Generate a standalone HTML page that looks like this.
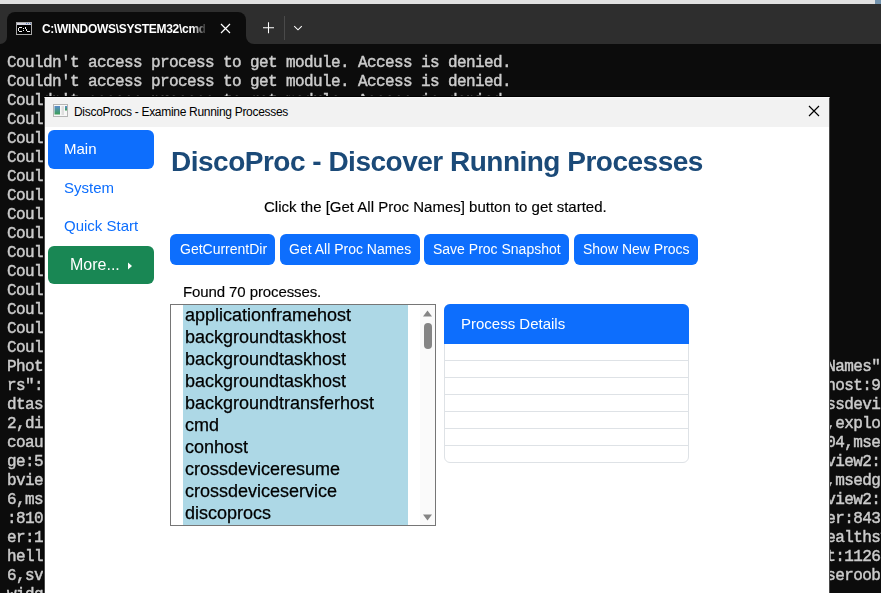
<!DOCTYPE html>
<html><head><meta charset="utf-8">
<style>
*{margin:0;padding:0;box-sizing:border-box}
html,body{width:881px;height:593px;overflow:hidden;background:#0c0c0c;position:relative;font-family:"Liberation Sans",sans-serif}
.abs{position:absolute}
#topstrip{left:0;top:0;width:881px;height:4px;background:#e1e1e1}
#topblue{left:875px;top:0;width:6px;height:4px;background:#7393ad}
#barTop{left:0;top:4px;width:881px;height:16px;background:#2e2e2e}
#barL{left:0;top:4px;width:7px;height:40px;background:#2e2e2e;border-bottom-right-radius:8px}
#barR{left:246px;top:4px;width:635px;height:40px;background:#2e2e2e;border-bottom-left-radius:8px}
#tab{left:7px;top:12px;width:239px;height:33px;background:#0c0c0c;border-radius:8px 8px 0 0}
#tabtitle{left:42px;top:19px;width:163px;height:20px;overflow:hidden;color:#fff;font-size:12px;letter-spacing:-0.3px;line-height:20px;font-weight:bold;white-space:nowrap;-webkit-mask-image:linear-gradient(to right,#000 92%,rgba(0,0,0,0.2) 100%)}
#term{left:7px;top:2px;width:881px;height:593px;color:#cccccc;font-family:"Liberation Mono",monospace;font-size:16px;letter-spacing:-0.6px;white-space:pre;will-change:transform;-webkit-text-stroke:0.45px #cccccc}
.tl{position:absolute;left:0;height:19px;line-height:19px}
#dlg{left:44px;top:97px;width:786px;height:500px;background:#fff;border:1px solid #4a4a4a;border-top-color:#fafafa;border-bottom:none;box-shadow:0 -1px 0 #000,-1px 0 0 #050505}
#title{left:45px;top:98px;width:784px;height:29px;background:#f2f2f2}
#titletext{left:74px;top:104px;font-size:12px;letter-spacing:-0.3px;line-height:16px;color:#000;white-space:nowrap}
.btn{position:absolute;background:#0d6efd;color:#fff;border-radius:6px;white-space:nowrap}
.t{position:absolute;white-space:nowrap;line-height:1}
.li{position:absolute;left:0;height:22px;line-height:22px;font-size:18px;color:#000;white-space:nowrap;-webkit-text-stroke:0.25px #000}
.lg{position:absolute;left:0;width:243px;height:1px;background:#dee2e6}
</style></head>
<body>
<div id="topstrip" class="abs"></div>
<div id="topblue" class="abs"></div>
<div id="barTop" class="abs"></div>
<div id="barL" class="abs"></div>
<div id="barR" class="abs"></div>
<div id="tab" class="abs"></div>
<svg class="abs" style="left:16px;top:22px" width="16" height="13" viewBox="0 0 16 13" shape-rendering="crispEdges"><rect x="0" y="0" width="16" height="13" fill="#a8a8a8"/><rect x="1" y="1" width="14" height="2" fill="#d4d4e0"/><rect x="10" y="1" width="1" height="1" fill="#5a78b0"/><rect x="12" y="1" width="1" height="1" fill="#5a78b0"/><rect x="14" y="1" width="1" height="1" fill="#5a78b0"/><rect x="1" y="3" width="14" height="9" fill="#000"/><rect x="3" y="5" width="1" height="1" fill="#f0f0f0"/><rect x="3" y="9" width="1" height="1" fill="#f0f0f0"/><rect x="4" y="5" width="1" height="1" fill="#f0f0f0"/><rect x="4" y="9" width="1" height="1" fill="#f0f0f0"/><rect x="5" y="5" width="1" height="1" fill="#f0f0f0"/><rect x="5" y="9" width="1" height="1" fill="#f0f0f0"/><rect x="2" y="6" width="1" height="1" fill="#f0f0f0"/><rect x="2" y="7" width="1" height="1" fill="#f0f0f0"/><rect x="2" y="8" width="1" height="1" fill="#f0f0f0"/><rect x="7" y="6" width="1" height="1" fill="#f0f0f0"/><rect x="7" y="8" width="1" height="1" fill="#f0f0f0"/><rect x="9" y="5" width="1" height="1" fill="#f0f0f0"/><rect x="9" y="6" width="1" height="1" fill="#f0f0f0"/><rect x="10" y="7" width="1" height="1" fill="#f0f0f0"/><rect x="10" y="8" width="1" height="1" fill="#f0f0f0"/><rect x="11" y="9" width="1" height="1" fill="#f0f0f0"/><rect x="12" y="9" width="1" height="1" fill="#f0f0f0"/><rect x="13" y="9" width="1" height="1" fill="#f0f0f0"/></svg>
<div id="tabtitle" class="abs">C:\WINDOWS\SYSTEM32\cmd.exe</div>
<svg class="abs" style="left:220px;top:23px" width="11" height="11" viewBox="0 0 11 11"><path d="M1 1L10 10M10 1L1 10" stroke="#fff" stroke-width="1.2"/></svg>
<svg class="abs" style="left:262px;top:21px" width="13" height="13" viewBox="0 0 13 13"><path d="M6.5 1.2V12.2M1 6.7H12" stroke="#fff" stroke-width="1.05"/></svg>
<div class="abs" style="left:284px;top:16px;width:1px;height:24px;background:#4a4a4a"></div>
<svg class="abs" style="left:293px;top:25px" width="10" height="6" viewBox="0 0 10 6"><path d="M1.2 1.2L5 4.8L8.8 1.2" stroke="#fff" stroke-width="1.05" fill="none"/></svg>

<div id="term" class="abs">
<div class="tl" style="top:52px">Couldn't access process to get module. Access is denied.</div>
<div class="tl" style="top:71px">Couldn't access process to get module. Access is denied.</div>
<div class="tl" style="top:90px">Couldn't access process to get module. Access is denied.</div>
<div class="tl" style="top:109px">Couldn't access process to get module. Access is denied.</div>
<div class="tl" style="top:128px">Couldn't access process to get module. Access is denied.</div>
<div class="tl" style="top:147px">Couldn't access process to get module. Access is denied.</div>
<div class="tl" style="top:166px">Couldn't access process to get module. Access is denied.</div>
<div class="tl" style="top:185px">Couldn't access process to get module. Access is denied.</div>
<div class="tl" style="top:204px">Couldn't access process to get module. Access is denied.</div>
<div class="tl" style="top:223px">Couldn't access process to get module. Access is denied.</div>
<div class="tl" style="top:242px">Couldn't access process to get module. Access is denied.</div>
<div class="tl" style="top:261px">Couldn't access process to get module. Access is denied.</div>
<div class="tl" style="top:280px">Couldn't access process to get module. Access is denied.</div>
<div class="tl" style="top:299px">Couldn't access process to get module. Access is denied.</div>
<div class="tl" style="top:318px">Couldn't access process to get module. Access is denied.</div>
<div class="tl" style="top:337px">Couldn't access process to get module. Access is denied.</div>
<div class="tl" style="top:356px">Photo                                                                                      Names"</div>
<div class="tl" style="top:375px">rs":[                                                                                      host:97</div>
<div class="tl" style="top:394px">dtask                                                                                      ssdevic</div>
<div class="tl" style="top:413px">2,dis                                                                                      ,explor</div>
<div class="tl" style="top:432px">coaut                                                                                      04,msed</div>
<div class="tl" style="top:451px">ge:52                                                                                      view2:</div>
<div class="tl" style="top:470px">bview                                                                                      ,msedge</div>
<div class="tl" style="top:489px">6,msе                                                                                      view2:</div>
<div class="tl" style="top:508px">:8108                                                                                      er:8436</div>
<div class="tl" style="top:527px">er:10                                                                                      ealthsy</div>
<div class="tl" style="top:546px">hello                                                                                      t:11264</div>
<div class="tl" style="top:565px">6,svc                                                                                      seroobe</div>
<div class="tl" style="top:584px">widge                                                                                      </div>
</div>

<div id="dlg" class="abs"></div>
<div id="title" class="abs"></div>
<svg class="abs" style="left:53px;top:104px" width="15" height="13" viewBox="0 0 15 13">
<defs><linearGradient id="g1" x1="0" y1="0" x2="0" y2="1"><stop offset="0" stop-color="#5a8ccc"/><stop offset="1" stop-color="#3a9e55"/></linearGradient></defs>
<rect x="0.5" y="0.5" width="14" height="12" fill="#f7f7f7" stroke="#b4b4b4"/>
<rect x="1.5" y="2" width="5.5" height="8.5" fill="url(#g1)"/>
<rect x="8.5" y="2" width="2.5" height="9" fill="#dedede"/>
<rect x="12" y="2" width="2" height="4.5" fill="url(#g1)"/>
</svg>
<div id="titletext" class="abs">DiscoProcs - Examine Running Processes</div>
<svg class="abs" style="left:808px;top:105px" width="12" height="12" viewBox="0 0 12 12"><path d="M1 1L11 11M11 1L1 11" stroke="#000" stroke-width="1.15"/></svg>

<!-- nav -->
<div class="abs" style="left:48px;top:130px;width:106px;height:39px;background:#0d6efd;border-radius:6px"></div>
<div class="t" style="left:64px;top:141px;font-size:15px;color:#fff">Main</div>
<div class="t" style="left:64px;top:180px;font-size:15px;color:#0d6efd">System</div>
<div class="t" style="left:64px;top:218px;font-size:15px;color:#0d6efd">Quick Start</div>
<div class="abs" style="left:48px;top:246px;width:106px;height:38px;background:#198754;border-radius:6px"></div>
<div class="t" style="left:70px;top:257px;font-size:16px;color:#fff">More...</div>
<svg class="abs" style="left:127px;top:262px" width="6" height="8" viewBox="0 0 6 8"><path d="M1 0.5L5 4L1 7.5Z" fill="#fff"/></svg>

<!-- main -->
<div class="t" style="left:171px;top:148px;font-size:28px;letter-spacing:-0.5px;font-weight:bold;color:#1b4a78">DiscoProc - Discover Running Processes</div>
<div class="t" style="left:264px;top:199px;font-size:15px;color:#000;-webkit-text-stroke:0.15px #000">Click the [Get All Proc Names] button to get started.</div>

<div class="btn" style="left:170px;top:234px;width:105px;height:31px"></div>
<div class="btn" style="left:280px;top:234px;width:140px;height:31px"></div>
<div class="btn" style="left:424px;top:234px;width:145px;height:31px"></div>
<div class="btn" style="left:574px;top:234px;width:124px;height:31px"></div>
<div class="t" style="left:180px;top:242px;font-size:14px;color:#fff">GetCurrentDir</div>
<div class="t" style="left:289px;top:242px;font-size:14px;color:#fff">Get All Proc Names</div>
<div class="t" style="left:433px;top:242px;font-size:14px;color:#fff">Save Proc Snapshot</div>
<div class="t" style="left:583px;top:242px;font-size:14px;color:#fff">Show New Procs</div>

<div class="t" style="left:183px;top:284px;font-size:15px;letter-spacing:-0.1px;color:#000;-webkit-text-stroke:0.15px #000">Found 70 processes.</div>

<!-- listbox -->
<div class="abs" style="left:170px;top:304px;width:266px;height:222px;border:1px solid #767676;background:#fff;overflow:hidden">
  <div class="abs" style="left:12px;top:0;width:225px;height:220px;background:#add8e6"></div>
  <div class="abs" style="left:14px;top:-1px;width:225px;height:222px">
<div class="li" style="top:0px">applicationframehost</div>
<div class="li" style="top:22px">backgroundtaskhost</div>
<div class="li" style="top:44px">backgroundtaskhost</div>
<div class="li" style="top:66px">backgroundtaskhost</div>
<div class="li" style="top:88px">backgroundtransferhost</div>
<div class="li" style="top:110px">cmd</div>
<div class="li" style="top:132px">conhost</div>
<div class="li" style="top:154px">crossdeviceresume</div>
<div class="li" style="top:176px">crossdeviceservice</div>
<div class="li" style="top:198px">discoprocs</div>
  </div>
  <div class="abs" style="left:249px;top:0;width:15px;height:220px;background:#fafafa"></div>
  <svg class="abs" style="left:252px;top:5px" width="9" height="7" viewBox="0 0 9 7"><path d="M4.5 0.5L9 6.5H0Z" fill="#858585"/></svg>
  <div class="abs" style="left:252.5px;top:18px;width:8.5px;height:26px;background:#858585;border-radius:4.5px"></div>
  <svg class="abs" style="left:252px;top:209px" width="9" height="7" viewBox="0 0 9 7"><path d="M0 0.5H9L4.5 6.5Z" fill="#858585"/></svg>
</div>

<!-- card -->
<div class="abs" style="left:444px;top:304px;width:245px;height:159px;border:1px solid #dee2e6;border-radius:6px;background:#fff"></div>
<div class="abs" style="left:444px;top:304px;width:245px;height:40px;background:#0d6efd;border-radius:6px 6px 0 0"></div>
<div class="abs" style="left:445px;top:305px;width:243px;height:156px;">
<div class="lg" style="top:55px"></div>
<div class="lg" style="top:72px"></div>
<div class="lg" style="top:89px"></div>
<div class="lg" style="top:106px"></div>
<div class="lg" style="top:123px"></div>
<div class="lg" style="top:140px"></div>
</div>
<div class="t" style="left:461px;top:316px;font-size:15px;color:#fff">Process Details</div>
</body></html>
